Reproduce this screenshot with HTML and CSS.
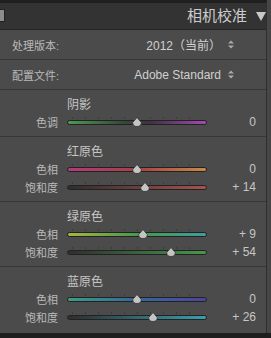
FILE: index.html
```html
<!DOCTYPE html>
<html lang="zh">
<head>
  <meta charset="UTF-8" />
  <title>相机校准</title>
  <link rel="stylesheet" href="styles.css">
</head>
<body>
  <div class="screen">
    <div class="panel">
      <div class="header">
        <span class="solo-icon"></span>
        <h1>相机校准</h1>
        <svg class="collapse" width="10" height="9" viewBox="0 0 10 9"><path d="M0 0 H10 L5 9 Z" fill="#c9c9c9"/></svg>
      </div>

      <div class="setting">
        <span class="setting-label">处理版本:</span>
        <span class="setting-value">2012（当前）</span>
        <svg class="stepper" width="6" height="9" viewBox="0 0 6 9"><path d="M0 3.5 L3 0.5 L6 3.5 Z M0 5.5 L3 8.5 L6 5.5 Z" fill="#a9a9a9"/></svg>
      </div>
      <div class="setting">
        <span class="setting-label">配置文件:</span>
        <span class="setting-value">Adobe Standard</span>
        <svg class="stepper" width="6" height="9" viewBox="0 0 6 9"><path d="M0 3.5 L3 0.5 L6 3.5 Z M0 5.5 L3 8.5 L6 5.5 Z" fill="#a9a9a9"/></svg>
      </div>

      <div class="group">
        <div class="group-title">阴影</div>
        <div class="row">
          <span class="row-label">色调</span>
          <div class="slider t-shadow"><span class="thumb" style="left: 50%"></span></div>
          <span class="row-value">0</span>
        </div>
      </div>

      <div class="group">
        <div class="group-title">红原色</div>
        <div class="row">
          <span class="row-label">色相</span>
          <div class="slider t-red-hue"><span class="thumb" style="left: 50%"></span></div>
          <span class="row-value">0</span>
        </div>
        <div class="row">
          <span class="row-label">饱和度</span>
          <div class="slider t-red-sat"><span class="thumb" style="left: 55.7%"></span></div>
          <span class="row-value">+ 14</span>
        </div>
      </div>

      <div class="group">
        <div class="group-title">绿原色</div>
        <div class="row">
          <span class="row-label">色相</span>
          <div class="slider t-green-hue"><span class="thumb" style="left: 54.3%"></span></div>
          <span class="row-value">+ 9</span>
        </div>
        <div class="row">
          <span class="row-label">饱和度</span>
          <div class="slider t-green-sat"><span class="thumb" style="left: 74.3%"></span></div>
          <span class="row-value">+ 54</span>
        </div>
      </div>

      <div class="group">
        <div class="group-title">蓝原色</div>
        <div class="row">
          <span class="row-label">色相</span>
          <div class="slider t-blue-hue"><span class="thumb" style="left: 50%"></span></div>
          <span class="row-value">0</span>
        </div>
        <div class="row">
          <span class="row-label">饱和度</span>
          <div class="slider t-blue-sat"><span class="thumb" style="left: 61.4%"></span></div>
          <span class="row-value">+ 26</span>
        </div>
      </div>
    </div>
    <div class="bottom-bar"></div>
  </div>
</body>
</html>
```

FILE: styles.css
```css
html, body {
  margin: 0;
  background: #1e1e1e;
}

body {
  font-family: "Liberation Sans", "Noto Sans CJK SC", sans-serif;
  color: #c6c6c6;
}

.screen {
  width: 271px;
  height: 338px;
  background: #464646;
  overflow: hidden;
}

.panel {
  width: 267px;
  height: 333px;
  background: #4b4b4b;
  border-right: 1px solid #2f2f2f;
  border-top: 3px solid #1f1f1f;
  box-sizing: border-box;
}

.header {
  height: 26px;
  display: flex;
  align-items: center;
  background: #333333;
  border-bottom: 1px solid #262626;
}

.solo-icon {
  width: 4px;
  height: 11px;
  background: #8c8c8c;
  border: 1px solid #222;
  border-left: none;
  margin-top: -2px;
}

.header h1 {
  margin: 0 0 0 auto;
  font-size: 15px;
  font-weight: normal;
  color: #cccccc;
  line-height: 20px;
}

.collapse {
  margin: 1px 0 0 9px;
}

.setting {
  height: 29px;
  display: flex;
  align-items: center;
  padding: 0 32px 0 12px;
  border-bottom: 1px solid #363636;
}

.setting-label {
  font-size: 11px;
  color: #bababa;
}

.setting-value {
  margin-left: auto;
  font-size: 12px;
  color: #d0d0d0;
}

.stepper {
  margin-left: 7px;
}

.group {
  padding: 7px 0 5px;
  border-bottom: 1px solid #363636;
}

.group:last-child {
  border-bottom: none;
}

.group-title {
  padding-left: 67px;
  font-size: 12px;
  line-height: 16px;
  color: #c6c6c6;
}

.row {
  display: grid;
  grid-template-columns: 58px 140px 1fr;
  column-gap: 9px;
  height: 18px;
  align-items: center;
  padding-right: 10px;
}

.row-label {
  text-align: right;
  font-size: 11px;
  color: #bababa;
}

.row-value {
  text-align: right;
  font-size: 12px;
  color: #c6c6c6;
}

.slider {
  position: relative;
  height: 18px;
}

.slider::before {
  content: "";
  position: absolute;
  left: 0;
  right: 0;
  top: 7px;
  height: 3px;
  border: 1px solid #222;
  border-radius: 3px;
  background: var(--track);
}

.slider::after {
  content: "";
  position: absolute;
  left: 5px;
  right: 5px;
  top: 4px;
  height: 2px;
  background: repeating-linear-gradient(90deg, #3a3a3a 0 1px, transparent 1px 13px);
}

.thumb {
  position: absolute;
  top: 4px;
  width: 10px;
  height: 10px;
  margin-left: -5px;
  z-index: 1;
  background: url("data:image/svg+xml,%3Csvg xmlns='http://www.w3.org/2000/svg' viewBox='0 0 10 10'%3E%3Cpath d='M5 0.5 L9.3 5.5 Q9.3 9.5 5 9.5 Q0.7 9.5 0.7 5.5 Z' fill='%23c4c4c4' stroke='%23333' stroke-width='0.8'/%3E%3C/svg%3E") no-repeat;
}

.t-shadow { --track: linear-gradient(90deg, #4c9a52, #34493a 40%, #3f3146 60%, #a24bb2); }
.t-red-hue { --track: linear-gradient(90deg, #b43a7c, #a84047 50%, #c98a44); }
.t-red-sat { --track: linear-gradient(90deg, #2e2e2e, #a8504e); }
.t-green-hue { --track: linear-gradient(90deg, #a8b440, #469a4a 50%, #3c9ea0); }
.t-green-sat { --track: linear-gradient(90deg, #2e2e2e, #46984a); }
.t-blue-hue { --track: linear-gradient(90deg, #3a9e86, #36689a 50%, #4e42a0); }
.t-blue-sat { --track: linear-gradient(90deg, #2e2e2e, #3a9eae); }

.bottom-bar {
  height: 5px;
  background: #1e1e1e;
}
```
